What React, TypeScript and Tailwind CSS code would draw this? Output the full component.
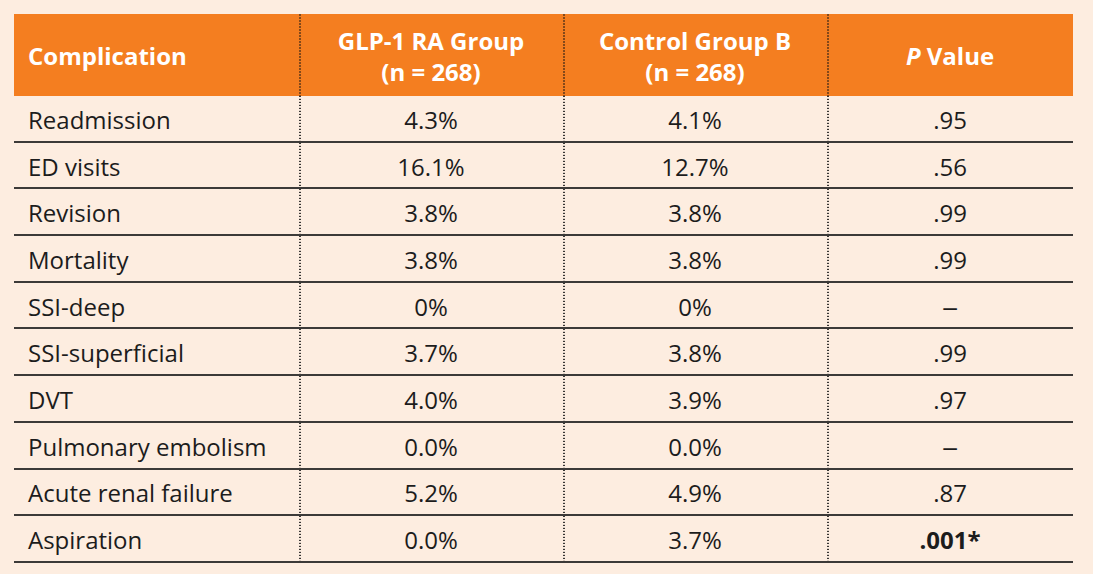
import React from 'react';

const rows = [
  ['Readmission', '4.3%', '4.1%', '.95'],
  ['ED visits', '16.1%', '12.7%', '.56'],
  ['Revision', '3.8%', '3.8%', '.99'],
  ['Mortality', '3.8%', '3.8%', '.99'],
  ['SSI-deep', '0%', '0%', '–'],
  ['SSI-superficial', '3.7%', '3.8%', '.99'],
  ['DVT', '4.0%', '3.9%', '.97'],
  ['Pulmonary embolism', '0.0%', '0.0%', '–'],
  ['Acute renal failure', '5.2%', '4.9%', '.87'],
  ['Aspiration', '0.0%', '3.7%', '.001*'],
];

// dotted column rule drawn on the left edge of a cell
const dots =
  'bg-[image:linear-gradient(to_bottom,#141414_50%,transparent_50%)] bg-[length:2px_3px] bg-repeat-y bg-left';

const PValue = ({ v }: { v: string }) => {
  if (v === '–') return <span className="inline-block scale-x-[1.35]">–</span>;
  if (v === '.001*') return <span className="font-bold">{v}</span>;
  return <span>{v}</span>;
};

const App = () => {
  return (
    <div className="w-[1093px] h-[574px] bg-[#fdede0] pt-[14px] pl-[14px] font-['Open_Sans',sans-serif] text-[#1c1c1c]">
      <div className="w-[1059px] grid grid-cols-[285px_264px_264px_246px]">
        <div className="h-[82px] bg-[#f47e20] flex items-center pl-[14px] pt-[2px] text-white font-bold text-[24px]">
          Complication
        </div>
        <div className={`h-[82px] bg-[#f47e20] ${dots} flex flex-col items-center justify-center pt-[2px] text-white font-bold text-[24px] leading-[31px] text-center`}>
          <span>GLP-1 RA Group</span>
          <span>(n = 268)</span>
        </div>
        <div className={`h-[82px] bg-[#f47e20] ${dots} flex flex-col items-center justify-center pt-[2px] text-white font-bold text-[24px] leading-[31px] text-center`}>
          <span>Control Group B</span>
          <span>(n = 268)</span>
        </div>
        <div className={`h-[82px] bg-[#f47e20] ${dots} flex items-center justify-center pt-[2px] text-white font-bold text-[24px]`}>
          <span>
            <i>P</i> Value
          </span>
        </div>

        {rows.map((r, i) => (
          <React.Fragment key={i}>
            <div className="h-[46.7px] border-b-2 border-[#3c3a38] flex items-center pl-[14px] pt-[3px] text-[24px]">
              {r[0]}
            </div>
            <div className={`h-[46.7px] border-b-2 border-[#3c3a38] ${dots} flex items-center justify-center pt-[3px] text-[24px]`}>
              {r[1]}
            </div>
            <div className={`h-[46.7px] border-b-2 border-[#3c3a38] ${dots} flex items-center justify-center pt-[3px] text-[24px]`}>
              {r[2]}
            </div>
            <div className={`h-[46.7px] border-b-2 border-[#3c3a38] ${dots} flex items-center justify-center pt-[3px] text-[24px]`}>
              <PValue v={r[3]} />
            </div>
          </React.Fragment>
        ))}
      </div>
    </div>
  );
};

export default App;
